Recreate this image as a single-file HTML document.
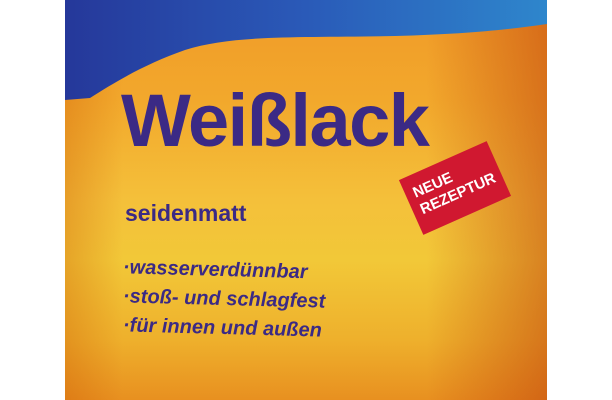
<!DOCTYPE html>
<html><head><meta charset="utf-8"><style>
html,body{margin:0;padding:0;background:#fff;width:612px;height:400px;overflow:hidden}
.can{position:absolute;left:65px;top:0;width:482px;height:400px;overflow:hidden;
background:linear-gradient(90deg,rgba(200,80,0,.3) 0%,rgba(0,0,0,0) 12%,rgba(0,0,0,0) 75%,rgba(190,60,10,.5) 100%),
linear-gradient(180deg,#f09a28 0%,#f2a82c 25%,#f4c03a 50%,#f2c838 65%,#eeb02c 85%,#e89020 100%);}
.txt{position:absolute;font-family:"Liberation Sans",sans-serif;font-weight:bold;color:#3b2a85}
</style></head><body>
<div class="can">
<svg width="482" height="120" style="position:absolute;left:0;top:0">
<defs><linearGradient id="b" x1="0" x2="1"><stop offset="0" stop-color="#25389a"/><stop offset=".5" stop-color="#2a5ab8"/><stop offset="1" stop-color="#2e86cc"/></linearGradient></defs>
<path d="M0 0H482V24C440 30 400 34 330 36C240 38 170 34 120 50C80 64 50 82 25 98L0 100Z" fill="url(#b)"/>
</svg>
<div class="txt" style="left:56px;top:78px;font-size:74px;letter-spacing:-1.5px">Weißlack</div>
<div class="txt" style="left:60px;top:200px;font-size:23px">seidenmatt</div>
<div class="txt" style="left:58px;top:256px;font-size:20px;font-style:italic;line-height:29px;font-weight:bold;transform:skewY(1.5deg)">·wasserverdünnbar<br>·stoß- und schlagfest<br>·für innen und außen</div>
<div style="position:absolute;left:342px;top:158px;width:96px;height:60px;background:#d01830;transform:rotate(-24deg);font-family:'Liberation Sans',sans-serif;font-weight:bold;color:#fff;font-size:15px;line-height:18px;padding:10px 0 0 8px;box-sizing:border-box">NEUE<br>REZEPTUR</div>
</div>
</body></html>
